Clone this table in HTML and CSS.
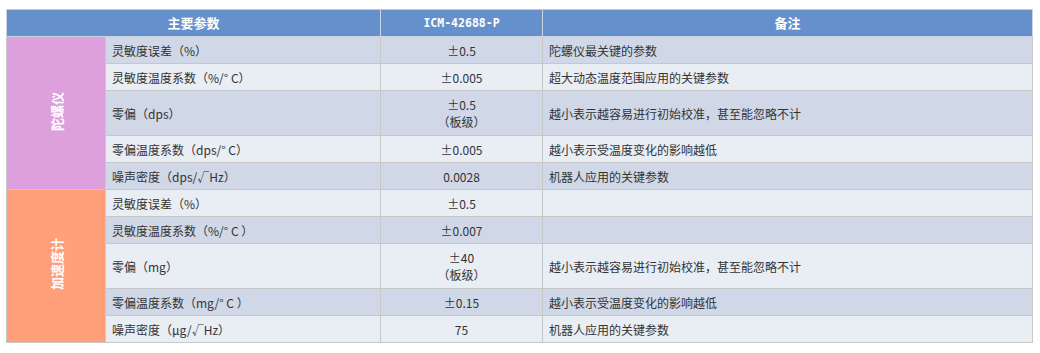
FILE: index.html
```html
<!DOCTYPE html>
<html lang="zh-CN">
<head>
<meta charset="utf-8">
<title>ICM-42688-P 主要参数</title>
<link rel="stylesheet" href="styles.css">
</head>
<body>
<table class="spec">
  <colgroup>
    <col class="c-group">
    <col class="c-param">
    <col class="c-value">
    <col class="c-note">
  </colgroup>
  <thead>
    <tr>
      <th colspan="2">主要参数</th>
      <th class="model">ICM-42688-P</th>
      <th>备注</th>
    </tr>
  </thead>
  <tbody>
    <tr class="dark">
      <td class="group gyro" rowspan="5"><span class="vlabel">陀螺仪</span></td>
      <td>灵敏度误差（%）</td>
      <td class="val">±0.5</td>
      <td>陀螺仪最关键的参数</td>
    </tr>
    <tr class="light">
      <td>灵敏度温度系数（%/° C）</td>
      <td class="val">±0.005</td>
      <td>超大动态温度范围应用的关键参数</td>
    </tr>
    <tr class="dark tall">
      <td>零偏（dps）</td>
      <td class="val">±0.5<br>（板级）</td>
      <td>越小表示越容易进行初始校准，甚至能忽略不计</td>
    </tr>
    <tr class="light">
      <td>零偏温度系数（dps/° C）</td>
      <td class="val">±0.005</td>
      <td>越小表示受温度变化的影响越低</td>
    </tr>
    <tr class="dark">
      <td>噪声密度（dps/√Hz）</td>
      <td class="val">0.0028</td>
      <td>机器人应用的关键参数</td>
    </tr>
    <tr class="light">
      <td class="group accel" rowspan="5"><span class="vlabel">加速度计</span></td>
      <td>灵敏度误差（%）</td>
      <td class="val">±0.5</td>
      <td></td>
    </tr>
    <tr class="dark">
      <td>灵敏度温度系数（%/° C ）</td>
      <td class="val">±0.007</td>
      <td></td>
    </tr>
    <tr class="light tall">
      <td>零偏（mg）</td>
      <td class="val">±40<br>（板级）</td>
      <td>越小表示越容易进行初始校准，甚至能忽略不计</td>
    </tr>
    <tr class="dark">
      <td>零偏温度系数（mg/° C ）</td>
      <td class="val">±0.15</td>
      <td>越小表示受温度变化的影响越低</td>
    </tr>
    <tr class="light">
      <td>噪声密度（μg/√Hz）</td>
      <td class="val">75</td>
      <td>机器人应用的关键参数</td>
    </tr>
  </tbody>
</table>
</body>
</html>
```
FILE: styles.css
```css
html, body {
  margin: 0;
  padding: 0;
  background: #ffffff;
}
body {
  padding: 9px 0 0 6px;
  font-family: "Noto Sans CJK SC", "Noto Sans", sans-serif;
  font-size: 12px;
  color: #333333;
}
.spec {
  width: 1026px;
  table-layout: fixed;
  border-collapse: collapse;
  border: 1px solid #c8c8c8;
}
.c-group { width: 99px; }
.c-param { width: 275px; }
.c-value { width: 162px; }
.c-note { width: 490px; }

.spec th {
  height: 26px;
  padding: 0;
  background: #6690cc;
  color: #ffffff;
  font-size: 13px;
  font-weight: bold;
  text-align: center;
  border: 1px solid #c8d3e3;
  border-top-color: #c8c8c8;
  line-height: 16px;
}
.spec th.model {
  font-family: "DejaVu Sans Mono", "Liberation Mono", monospace;
  font-size: 11.5px;
}
.spec td {
  height: 26px;
  padding: 0 6px;
  border: 1px solid #c8c8c8;
  line-height: 17px;
  white-space: nowrap;
}
.spec tr.tall td {
  height: 44px;
}
.spec tr.dark td { background: #d0d8e7; }
.spec tr.light td { background: #e9edf4; }
.spec td.val {
  text-align: center;
  padding: 0;
}
.spec td.group {
  padding: 0;
  text-align: center;
  vertical-align: middle;
}
.spec tr td.gyro { background: #dda0dd; }
.spec tr td.accel { background: #ffa07a; }
.vlabel {
  display: inline-block;
  writing-mode: vertical-rl;
  text-orientation: sideways;
  transform: rotate(180deg);
  color: #ffffff;
  font-weight: bold;
  font-size: 13px;
  line-height: 13px;
}
```
